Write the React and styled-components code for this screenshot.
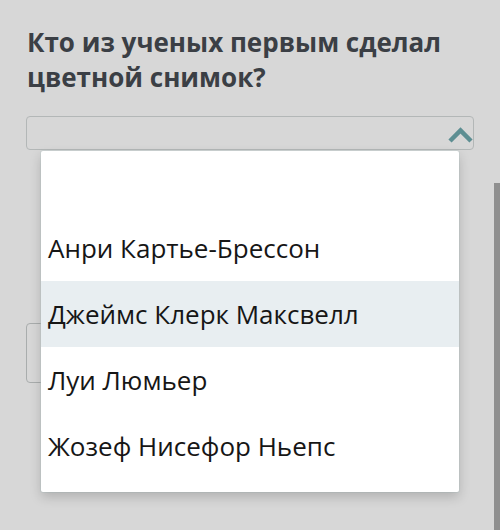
import React from 'react';
import styled, { createGlobalStyle } from 'styled-components';

const Global = createGlobalStyle`
  html, body { margin: 0; padding: 0; }
  body { background: #d7d7d7; font-family: "Open Sans", "Noto Sans", sans-serif; }
`;

const Page = styled.div`
  position: relative;
  width: 500px;
  height: 530px;
  overflow: hidden;
  background: #d7d7d7;
`;

const Question = styled.div`
  padding: 25px 26px 0 26px;
`;

const Title = styled.h2`
  margin: 0 0 21px 1px;
  font-size: 26px;
  line-height: 35px;
  font-weight: 700;
  color: #3b3f45;
`;

const Select = styled.div`
  box-sizing: border-box;
  height: 34px;
  border: 1px solid #b3b7b7;
  border-radius: 4px;
  display: flex;
  align-items: center;
  justify-content: flex-end;
  padding: 4px 0 0 0;
`;

const Answer = styled.div`
  box-sizing: border-box;
  margin-top: 173px;
  width: 200px;
  height: 60px;
  border: 1px solid #a9adad;
  border-radius: 4px;
`;

const Scrollbar = styled.div`
  position: absolute;
  right: 0;
  top: 183px;
  bottom: 0;
  width: 6px;
  background: #8f8f8f;
`;

const Menu = styled.ul`
  position: absolute;
  top: 151px;
  left: 41px;
  width: 418px;
  margin: 0;
  padding: 0 0 13px 0;
  list-style: none;
  background: #fff;
  border-radius: 2px;
  box-shadow: 0 5px 12px rgba(0, 0, 0, 0.18), 0 0 0 1px rgba(190, 205, 205, 0.4);
`;

const Item = styled.li`
  height: ${p => (p.$empty ? 64 : 66)}px;
  display: flex;
  align-items: center;
  padding-left: 7px;
  font-size: 26px;
  color: #161616;
  background: ${p => (p.$active ? '#e8eef1' : 'transparent')};
`;

const options = [
  'Анри Картье-Брессон',
  'Джеймс Клерк Максвелл',
  'Луи Люмьер',
  'Жозеф Нисефор Ньепс',
];

function Chevron() {
  return (
    <svg width="25" height="18" viewBox="0 0 25 18">
      <path d="M2 15 L12.5 4.5 L23 15" fill="none" stroke="#5d8e92" strokeWidth="4.5" />
    </svg>
  );
}

export default function App() {
  return (
    <Page>
      <Global />
      <Question>
        <Title>Кто из ученых первым сделал цветной снимок?</Title>
        <Select>
          <Chevron />
        </Select>
        <Answer />
      </Question>
      <Scrollbar />
      <Menu>
        <Item $empty />
        {options.map((o, i) => (
          <Item key={o} $active={i === 1}>{o}</Item>
        ))}
      </Menu>
    </Page>
  );
}
